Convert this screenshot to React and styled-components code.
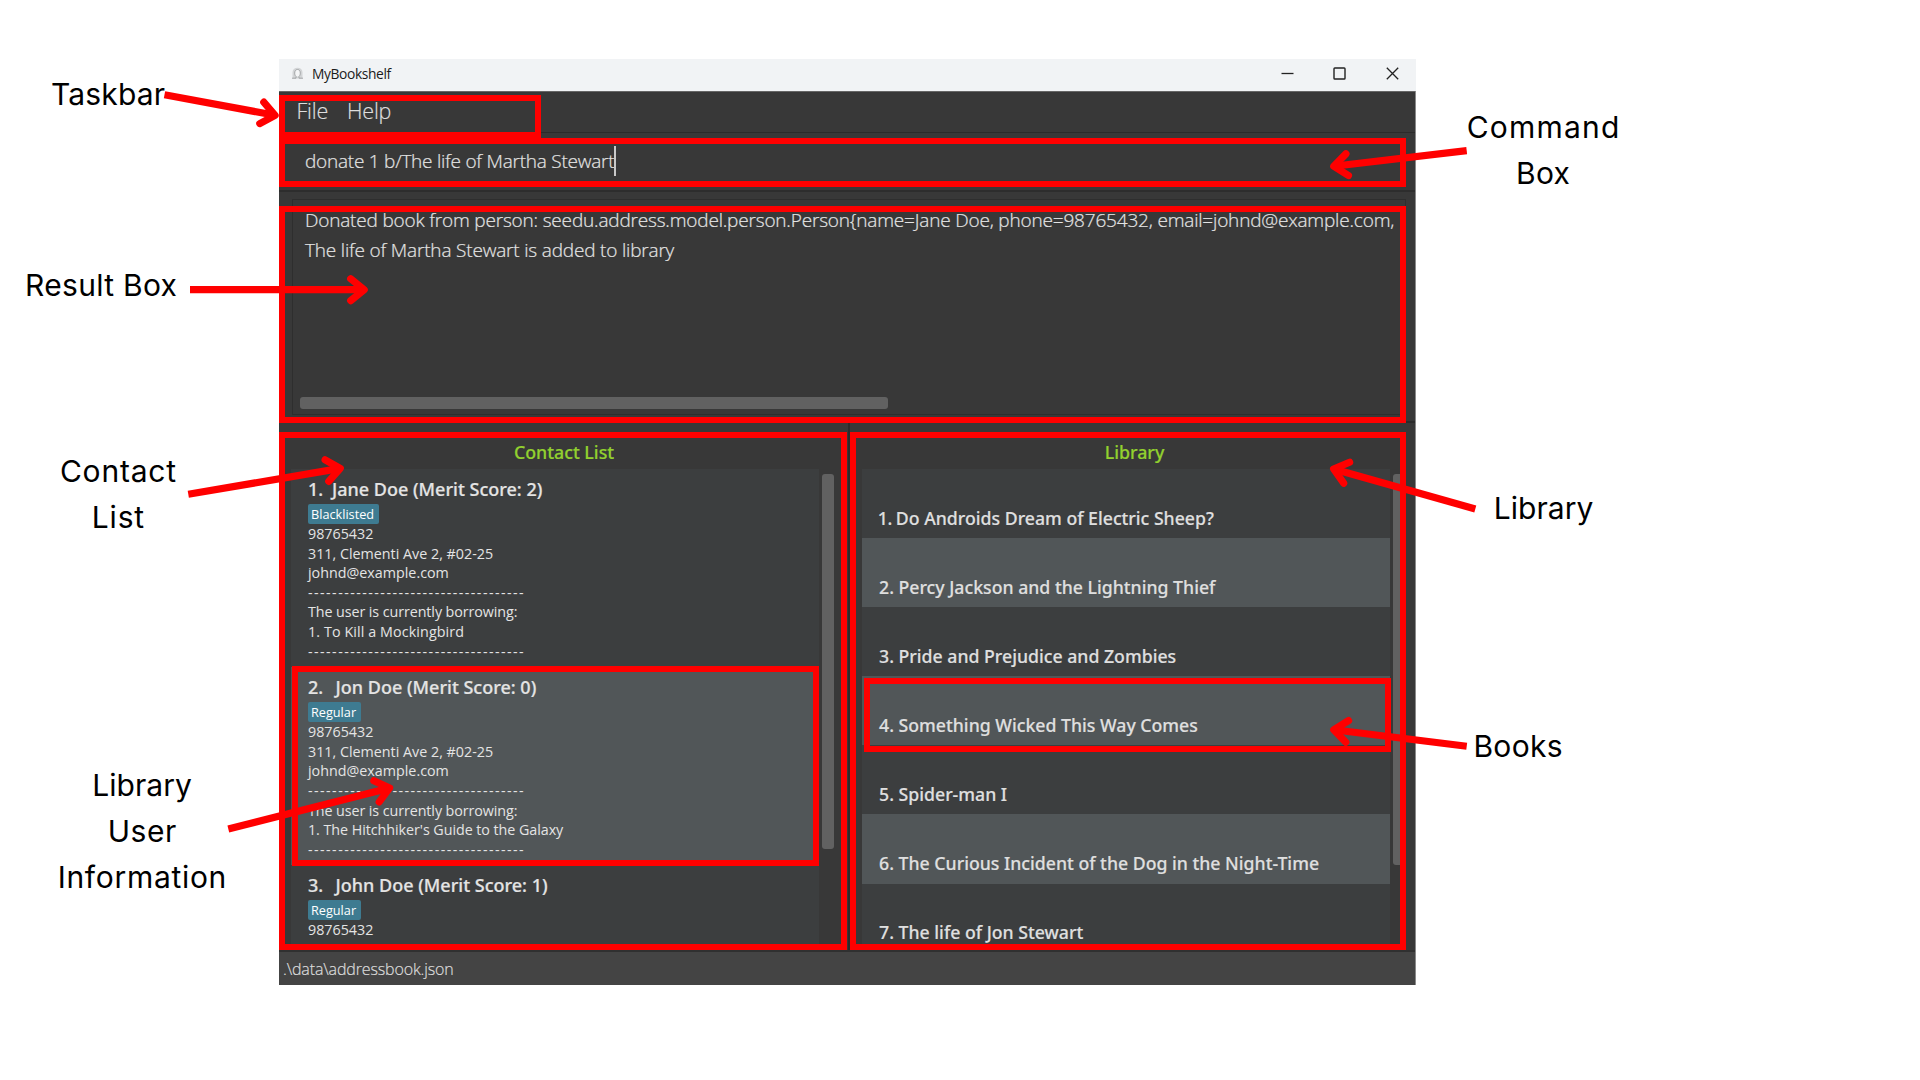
import React from "react";
import styled, { createGlobalStyle } from "styled-components";

const RED = "#ff0000";
const UI = '"Open Sans", "Noto Sans", sans-serif';
const UI_MEDIUM = '"Noto Sans", "Open Sans", sans-serif';

const GlobalStyle = createGlobalStyle`
  * { box-sizing: border-box; }
  body { margin: 0; background: #fff; overflow: hidden; }
`;

const Stage = styled.div`
  position: relative;
  width: 1920px;
  height: 1080px;
  padding: 59px 0 0 279px;
  background: #fff;
`;

/* ---------- application window ---------- */

const Window = styled.main`
  display: flex;
  flex-direction: column;
  width: 1137px;
  height: 926px;
  background: #383838;
  border-right: 1px solid #8a8a8a;
  font-family: ${UI};
  color: #e4e4e4;
  white-space: pre;
`;

const TitleBar = styled.header`
  display: flex;
  align-items: center;
  height: 32px;
  margin-right: -1px;
  padding: 0 17.5px 4px 12px;
  background: #f1f3f5;
  color: #1b1b1b;
`;

const WindowTitle = styled.h1`
  flex: 1;
  margin: 0 0 0 8px;
  font-size: 13.8px;
  font-weight: 400;
  letter-spacing: -0.38px;
`;

const WindowControls = styled.div`
  display: flex;
  gap: 39.5px;
`;

const MenuBar = styled.nav`
  display: flex;
  gap: 19px;
  height: 42px;
  padding: 4px 0 0 17.5px;
  border-top: 1px solid #666;
  border-bottom: 1px solid #2b2b2b;
`;

const MenuItem = styled.span`
  font-size: 21.5px;
  font-weight: 300;
  line-height: 30px;
  letter-spacing: -0.2px;
  color: #dedede;
  -webkit-text-stroke: 0.2px #dedede;
`;

const CommandArea = styled.section`
  height: 57px;
  padding: 13px 0 0 26px;
`;

const CommandInput = styled.div`
  display: flex;
  font-size: 19px;
  font-weight: 300;
  line-height: 30px;
  letter-spacing: -0.24px;
  -webkit-text-stroke: 0.2px #e4e4e4;
`;

const Caret = styled.span`
  width: 2px;
  height: 30px;
  background: #c9c9c9;
`;

const ResultArea = styled.section`
  height: 233px;
  padding: 7px 9px 7px 13px;
  border-top: 2px solid #2d2d2d;
  border-bottom: 2px solid #2b2b2b;
`;

const ResultBox = styled.div`
  display: flex;
  flex-direction: column;
  justify-content: space-between;
  height: 216px;
  padding: 6px 7px 5px;
  border: 1px solid #2e2e2e;
`;

const ResultText = styled.p`
  margin: 0;
  padding-left: 5px;
  font-size: 19px;
  font-weight: 300;
  line-height: 29.6px;
  letter-spacing: -0.18px;
  -webkit-text-stroke: 0.2px #e4e4e4;
`;

const HorizontalThumb = styled.div`
  width: 588px;
  height: 12px;
  border-radius: 3px;
  background: #616161;
`;

const SplitPane = styled.div`
  display: flex;
  flex: 1;
  min-height: 0;
`;

const Divider = styled.div`
  width: 2px;
  background: #2b2b2b;
`;

const Pane = styled.section`
  display: flex;
  flex-direction: column;
  width: ${(p) => p.$width}px;
`;

const PaneTitle = styled.h2`
  height: 46px;
  margin: 0;
  padding: 17px 0 0 ${(p) => p.$shift || 0}px;
  font: 500 17.8px/24px ${UI_MEDIUM};
  color: #92d02f;
  -webkit-text-stroke: 0.2px #92d02f;
  text-align: center;
`;

const PaneBody = styled.div`
  display: flex;
  gap: 3.5px;
  height: 475px;
  padding-left: 12px;
`;

const List = styled.ul`
  width: 527.5px;
  margin: 0;
  padding: 0;
  overflow: hidden;
  list-style: none;
  background: #3c3e3f;
`;

const VerticalThumb = styled.div`
  width: 12px;
  height: ${(p) => p.$height}px;
  margin-top: 5px;
  border-radius: 3px;
  background: #616161;
`;

const Card = styled.li`
  height: 198.2px;
  padding: 7.5px 0 0 17px;
  background: ${(p) => (p.$alt ? "#515658" : "#3c3e3f")};
`;

const CardName = styled.h3`
  display: flex;
  margin: 0 0 2px;
  font: 500 18px/25px ${UI_MEDIUM};
  -webkit-text-stroke: 0.2px #e4e4e4;
`;

const CardIndex = styled.span`
  width: ${(p) => p.$width}px;
`;

const Tag = styled.div`
  width: fit-content;
  height: 20.6px;
  padding: 0 4.5px 0 3px;
  border-radius: 2px;
  background: #3e7b91;
  color: #fff;
  font-size: 12.7px;
  line-height: 20px;
`;

const CardLine = styled.div`
  font-size: 14.3px;
  line-height: 19.6px;
  letter-spacing: ${(p) => p.$spacing || 0}px;
`;

const BookRow = styled.li`
  height: 69.1px;
  padding: 36.9px 0 0 17px;
  background: ${(p) => (p.$alt ? "#515658" : "#3c3e3f")};
  font: 500 17.7px/24px ${UI_MEDIUM};
  color: #dfdfdf;
  -webkit-text-stroke: 0.2px #dfdfdf;
`;

const BookIndex = styled.span`
  margin-left: ${(p) => (p.$tight ? "-1.2px" : "0")};
  letter-spacing: ${(p) => (p.$tight ? "-0.5px" : "0")};
`;

const StatusBar = styled.footer`
  height: 35px;
  padding: 2px 0 0 4px;
  border-top: 2px solid #303030;
  background: #444;
  font-size: 16px;
  font-weight: 300;
  line-height: 31px;
  letter-spacing: -0.14px;
  color: #dcdcdc;
  -webkit-text-stroke: 0.2px #dcdcdc;
`;

/* ---------- annotations floating above the window ---------- */

const Frame = styled.div`
  position: absolute;
  left: ${(p) => p.$x}px;
  top: ${(p) => p.$y}px;
  width: ${(p) => p.$w}px;
  height: ${(p) => p.$h}px;
  border: 6px solid ${RED};
`;

const ArrowLayer = styled.svg`
  position: absolute;
  inset: 0;
  pointer-events: none;
`;

const Label = styled.div`
  position: absolute;
  left: ${(p) => p.$cx}px;
  top: ${(p) => p.$y}px;
  transform: translateX(-50%);
  display: flex;
  flex-direction: column;
  align-items: center;
  font: 400 30px/46px Inter, sans-serif;
  color: #000;
  white-space: nowrap;
`;

const LabelLine = styled.span`
  margin-right: -${(p) => p.$spacing}px;
  letter-spacing: ${(p) => p.$spacing}px;
`;

const frames = [
  { x: 279, y: 95, w: 262, h: 43 },
  { x: 279, y: 138, w: 1127, h: 49 },
  { x: 279, y: 206, w: 1127, h: 217 },
  { x: 279, y: 432, w: 568, h: 518 },
  { x: 850, y: 432, w: 556, h: 518 },
  { x: 292, y: 666, w: 527, h: 200 },
  { x: 864, y: 678, w: 527, h: 74 },
];

const arrows = [
  [164.5, 94.7, 278.8, 116],
  [190, 289.7, 368, 289.7],
  [188.3, 494.3, 344, 467.7],
  [228.3, 829, 393.3, 787],
  [1466.7, 150.7, 1330, 166.7],
  [1475.3, 509, 1330, 468],
  [1466.7, 746.3, 1330, 729.3],
];

const labels = [
  { cx: 108, y: 71, lines: [["Taskbar", 0.15]] },
  { cx: 101, y: 262, lines: [["Result Box", 0.3]] },
  { cx: 118, y: 448, lines: [["Contact", 0.8], ["List", 0.8]] },
  { cx: 142, y: 762, lines: [["Library", 0.05], ["User", 0.5], ["Information", 0.7]] },
  { cx: 1543, y: 104, lines: [["Command", 1.2], ["Box", 0.3]] },
  { cx: 1543.5, y: 485, lines: [["Library", 0.05]] },
  { cx: 1518, y: 723, lines: [["Books", 0.3]] },
];

const DASHES = "-".repeat(36);

const contacts = [
  { name: "Jane Doe (Merit Score: 2)", tag: "Blacklisted", book: "1. To Kill a Mockingbird", spacing: 0.1 },
  { name: "Jon Doe (Merit Score: 0)", tag: "Regular", book: "1. The Hitchhiker's Guide to the Galaxy", spacing: -0.05 },
  { name: "John Doe (Merit Score: 1)", tag: "Regular" },
];

const books = [
  "Do Androids Dream of Electric Sheep?",
  "Percy Jackson and the Lightning Thief",
  "Pride and Prejudice and Zombies",
  "Something Wicked This Way Comes",
  "Spider-man I",
  "The Curious Incident of the Dog in the Night-Time",
  "The life of Jon Stewart",
];

function Arrow({ x1, y1, x2, y2 }) {
  const length = Math.hypot(x2 - x1, y2 - y1);
  const angle = (Math.atan2(y2 - y1, x2 - x1) * 180) / Math.PI;
  const tip = length - 3.8;
  return (
    <g transform={`translate(${x1} ${y1}) rotate(${angle})`} fill="none" stroke={RED} strokeWidth="7.2">
      <line x1="0" y1="0" x2={tip} y2="0" />
      <path
        d={`M${tip - 13.5} -10.9 L${tip} 0 L${tip - 13.5} 10.9`}
        strokeLinecap="round"
        strokeLinejoin="round"
      />
    </g>
  );
}

function AppIcon() {
  return (
    <svg width="13" height="13" viewBox="0 0 13 13" fill="none">
      <path d="M1.5 11.5V5.4C1.5 2.6 3.5 0.8 6.5 0.8S11.5 2.6 11.5 5.4V11.5Z" fill="#d3d5d7" />
      <path d="M4.7 9.6C4 8.8 3.8 7.6 3.8 6.2C3.8 4 4.7 2.7 6.5 2.7S9.2 4 9.2 6.2C9.2 7.6 9 8.8 8.3 9.6Z" fill="#f4f5f6" />
      <path d="M1 11.2H5V9.4C4 8.6 3.7 7.4 3.7 6.1C3.7 3.9 4.7 2.5 6.5 2.5S9.3 3.9 9.3 6.1C9.3 7.4 9 8.6 8 9.4V11.2H12" stroke="#a4a6a8" strokeWidth="1" />
    </svg>
  );
}

function Controls() {
  return (
    <WindowControls>
      <svg width="13" height="13" viewBox="0 0 13 13" stroke="#222" strokeWidth="1.3">
        <path d="M0.5 6.5H12.5" />
      </svg>
      <svg width="13" height="13" viewBox="0 0 13 13" fill="none" stroke="#222" strokeWidth="1.4">
        <rect x="1" y="1" width="11" height="11" rx="0.8" />
      </svg>
      <svg width="13" height="13" viewBox="0 0 13 13" stroke="#222" strokeWidth="1.3">
        <path d="M0.8 0.8L12.2 12.2M12.2 0.8L0.8 12.2" />
      </svg>
    </WindowControls>
  );
}

function ContactCard({ contact, index }) {
  return (
    <Card $alt={index % 2 === 1}>
      <CardName>
        <CardIndex $width={index === 0 ? 24 : 27.6}>{index + 1}.</CardIndex>
        {contact.name}
      </CardName>
      <Tag>{contact.tag}</Tag>
      <CardLine>98765432</CardLine>
      {contact.book && (
        <>
          <CardLine>311, Clementi Ave 2, #02-25</CardLine>
          <CardLine>johnd@example.com</CardLine>
          <CardLine $spacing={1.43}>{DASHES}</CardLine>
          <CardLine $spacing={-0.08}>The user is currently borrowing:</CardLine>
          <CardLine $spacing={contact.spacing}>{contact.book}</CardLine>
          <CardLine $spacing={1.43}>{DASHES}</CardLine>
        </>
      )}
    </Card>
  );
}

export default function App() {
  return (
    <Stage>
      <GlobalStyle />
      <Window>
        <TitleBar>
          <AppIcon />
          <WindowTitle>MyBookshelf</WindowTitle>
          <Controls />
        </TitleBar>
        <MenuBar>
          <MenuItem>File</MenuItem>
          <MenuItem>Help</MenuItem>
        </MenuBar>
        <CommandArea>
          <CommandInput>
            donate 1 b/The life of Martha Stewart
            <Caret />
          </CommandInput>
        </CommandArea>
        <ResultArea>
          <ResultBox>
            <ResultText>
              {"Donated book from person: seedu.address.model.person.Person{name=Jane Doe, phone=98765432, email=johnd@example.com,\nThe life of Martha Stewart is added to library"}
            </ResultText>
            <HorizontalThumb />
          </ResultBox>
        </ResultArea>
        <SplitPane>
          <Pane $width={569}>
            <PaneTitle $shift={1}>Contact List</PaneTitle>
            <PaneBody>
              <List>
                {contacts.map((c, i) => (
                  <ContactCard key={c.name} contact={c} index={i} />
                ))}
              </List>
              <VerticalThumb $height={375} />
            </PaneBody>
          </Pane>
          <Divider />
          <Pane $width={565}>
            <PaneTitle $shift={4}>Library</PaneTitle>
            <PaneBody>
              <List>
                {books.map((title, i) => (
                  <BookRow key={title} $alt={i % 2 === 1}>
                    <BookIndex $tight={i === 0}>{i + 1}. </BookIndex>
                    {title}
                  </BookRow>
                ))}
              </List>
              <VerticalThumb $height={391} />
            </PaneBody>
          </Pane>
        </SplitPane>
        <StatusBar>.\data\addressbook.json</StatusBar>
      </Window>

      {frames.map((f) => (
        <Frame key={`${f.x}-${f.y}`} $x={f.x} $y={f.y} $w={f.w} $h={f.h} />
      ))}
      <ArrowLayer width="1920" height="1080" viewBox="0 0 1920 1080">
        {arrows.map(([x1, y1, x2, y2]) => (
          <Arrow key={`${x1}-${y1}`} x1={x1} y1={y1} x2={x2} y2={y2} />
        ))}
      </ArrowLayer>
      {labels.map((l) => (
        <Label key={`${l.cx}-${l.y}`} $cx={l.cx} $y={l.y}>
          {l.lines.map(([text, spacing]) => (
            <LabelLine key={text} $spacing={spacing}>
              {text}
            </LabelLine>
          ))}
        </Label>
      ))}
    </Stage>
  );
}
